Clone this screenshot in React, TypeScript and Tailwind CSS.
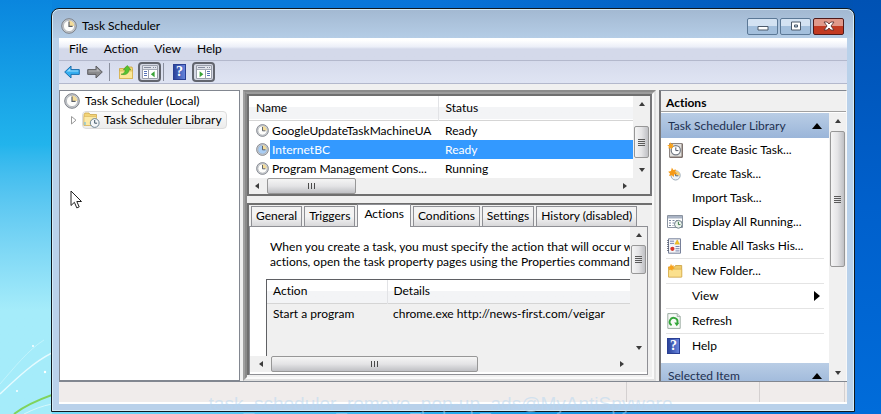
import { useState } from "react";
import type { ReactNode } from "react";
import clsx from "clsx";

interface Task {
  name: string;
  status: string;
}

interface ActionItem {
  label: string;
  icon?: ReactNode;
  separator?: boolean;
  submenu?: boolean;
}

const MENUS = ["File", "Action", "View", "Help"];

const TASKS: Task[] = [
  { name: "GoogleUpdateTaskMachineUA", status: "Ready" },
  { name: "InternetBC", status: "Ready" },
  { name: "Program Management Cons...", status: "Running" },
];

const TABS = ["General", "Triggers", "Actions", "Conditions", "Settings", "History (disabled)"];

/* ---------- icons ---------- */

function ClockIcon({ className, face = "#fdfdfb" }: { className?: string; face?: string }) {
  return (
    <svg viewBox="0 0 16 16" className={clsx("shrink-0", className)} fill="none" aria-hidden="true">
      <circle cx="8" cy="8" r="7.3" fill="#c9cdd2" stroke="#7b7f86" strokeWidth="1" />
      <circle cx="8" cy="8" r="5.6" fill={face} stroke="#a4a8ae" strokeWidth="0.7" />
      <path d="M8 8V2.6A5.4 5.4 0 0 1 13.4 8z" fill="#f3dc9a" />
      <path d="M8 3.6V8.4H11.6" stroke="#5c6068" strokeWidth="1.2" />
    </svg>
  );
}

function BackIcon() {
  return (
    <svg viewBox="0 0 16 14" className="h-[14px] w-4" aria-hidden="true">
      <path d="M.7 7 7 1v3.6h8.3v4.8H7V13z" fill="#35aef0" stroke="#1b6fae" strokeLinejoin="round" />
      <path d="M2.6 6.6 6.2 3.2v2.4h8.1v1z" fill="#9adcfb" />
    </svg>
  );
}

function ForwardIcon() {
  return (
    <svg viewBox="0 0 16 14" className="h-[14px] w-4" aria-hidden="true">
      <path d="M15.3 7 9 1v3.6H.7v4.8H9V13z" fill="#8b8b8d" stroke="#5f5f63" strokeLinejoin="round" />
      <path d="M13.4 6.6 9.8 3.2v2.4H1.7v1z" fill="#b4b4b6" />
    </svg>
  );
}

function UpFolderIcon() {
  return (
    <svg viewBox="0 0 16 16" className="h-4 w-4" aria-hidden="true">
      <path d="M1.5 4.5h5l1-1.5h6.5l.5 1.5v10h-13z" fill="#f3d774" stroke="#c9a23c" strokeWidth=".8" />
      <path d="M1.5 7h13v7.5h-13z" fill="#fbe797" stroke="#d0aa48" strokeWidth=".6" />
      <path d="M3 10.2c3-.4 4-2 4.2-4.4H5.4L9.3 1.4l3.5 4.4H11c-.2 3.6-3 5.8-8 4.4z" fill="#55c32f" stroke="#2f8f1c" strokeWidth=".5" />
    </svg>
  );
}

function PaneIcon({ flip }: { flip?: boolean }) {
  return (
    <svg viewBox="0 0 16 14" className="h-[14px] w-4" aria-hidden="true">
      <path d="M.5.5h15v13H.5z" fill="#fff" stroke="#9a9fab" />
      <path d="M1 1h14v3H1z" fill="#e0e3ea" />
      <path d="M2 2.5h7M11 2.5h1M13 2.5h1" stroke="#868ca0" />
      <path d="M1 4.5h14" stroke="#a5aab6" />
      {flip ? (
        <>
          <path d="M9.5 5v8.5" stroke="#9a9fab" />
          <path d="M11 6.5h3M11 8.5h3M11 10.5h3" stroke="#5873b8" />
          <path d="M3.6 6.2 7.4 9.2l-3.8 3z" fill="#3aa338" />
        </>
      ) : (
        <>
          <path d="M6.5 5v8.5" stroke="#9a9fab" />
          <path d="M2 6.5h3M2 8.5h3M2 10.5h3" stroke="#5873b8" />
          <path d="M12.6 6.2 8.8 9.2l3.8 3z" fill="#3aa338" />
        </>
      )}
    </svg>
  );
}

function HelpIcon() {
  return (
    <span className="flex h-4 w-[13px] items-center justify-center border border-[#2a3f93] bg-linear-to-r from-[#2c449c] to-[#6683dc] font-[Liberation_Serif,serif] text-sm leading-none font-bold text-white">
      ?
    </span>
  );
}

function LibraryFolderIcon() {
  return (
    <svg viewBox="0 0 17 16" className="h-4 w-[17px] shrink-0" aria-hidden="true">
      <path d="M1 2.5 2 1h4l1 1.5h6.5v11H1z" fill="#f2d477" stroke="#cda64a" strokeWidth=".8" />
      <path d="M1 4.5h12.5v9H1z" fill="#fbe9a6" stroke="#d6b25a" strokeWidth=".6" />
      <path d="M2 10v3" stroke="#59b6e8" />
      <circle cx="11.7" cy="11" r="4.4" fill="#f4f6f8" stroke="#6e8494" />
      <path d="M11.7 8v3.2h2.4" stroke="#3f5566" fill="none" />
    </svg>
  );
}

function BasicTaskIcon() {
  return (
    <svg viewBox="0 0 16 16" className="h-4 w-4" aria-hidden="true">
      <path d="M2.5 1.5h12.8v13.8H2.5z" fill="#e3e1de" stroke="#8d8582" />
      <path d="M15.2 2v13.2H3" stroke="#6d5d59" fill="none" />
      <circle cx="8.8" cy="8.3" r="4.6" fill="#fff" stroke="#757b85" strokeWidth="1.2" />
      <path d="M8.8 5.4v3.2h2.6" stroke="#4e5663" fill="none" />
      <path d="m3.5.2.9 2 2-.6-.8 2 1.6 1.2-2.2.5-.2 2.2-1.5-1.6-2 .7.7-2L.2 3.4l2.2-.6z" fill="#f8a21c" />
    </svg>
  );
}

function NewTaskIcon() {
  return (
    <svg viewBox="0 0 16 16" className="h-4 w-4" aria-hidden="true">
      <circle cx="8.6" cy="9.4" r="4.6" fill="#eef3f7" stroke="#9baab6" />
      <path d="M8.6 9.4V5A4.4 4.4 0 0 1 13 9.4z" fill="#f7cf74" />
      <path d="M8.6 6.6v3.2h2.8" stroke="#586977" fill="none" />
      <path d="m4.9 1.6 1.4 2.5 2.8-.6-.9 2.6 1.8 1.7-2.8.7-.5 2.5-1.8-1.8-2.8.7.9-2.5L1.2 5.8 4 5z" fill="#f59a17" />
    </svg>
  );
}

function RunningIcon() {
  return (
    <svg viewBox="0 0 16 14" className="h-[14px] w-4" aria-hidden="true">
      <path d="M.5.5h15v12H.5z" fill="#fff" stroke="#8a93a0" />
      <path d="M1 1h14v2.4H1z" fill="#a9b3c4" />
      <path d="M2 5.5h2M5.5 5.5h2M9 5.5h2M2 8h2M5.5 8h2M2 10.5h2M5.5 10.5h1" stroke="#7b87a0" />
      <circle cx="11.4" cy="9.3" r="3.9" fill="#eef4ee" stroke="#70808a" />
      <path d="M11.4 6.8v2.8h2" stroke="#3f7a4c" fill="none" />
    </svg>
  );
}

function HistoryIcon() {
  return (
    <svg viewBox="0 0 14 16" className="h-4 w-[14px]" aria-hidden="true">
      <path d="M1.5.8h12v14.4h-12z" fill="#f4f5f8" stroke="#77809a" />
      <path d="M3 3.2h4M3 5.4h4M8.5 8.5h4M8.5 10.7h4M8.5 12.9h4" stroke="#7a86ad" />
      <path d="M0 2.5h2M0 4.5h2M0 6.5h2M0 8.5h2M0 10.5h2M0 12.5h2" stroke="#5b6170" strokeWidth=".8" />
      <path d="m10.2 1.8 2.4 4.4H7.8z" fill="#f5c321" stroke="#c99a10" strokeWidth=".4" />
      <circle cx="5.4" cy="10.8" r="2.1" fill="#d8372a" />
    </svg>
  );
}

function NewFolderIcon() {
  return (
    <svg viewBox="0 0 16 16" className="h-4 w-4" aria-hidden="true">
      <path d="M1.5 4h6l1-1.5h6.2V14H1.5z" fill="#efca67" stroke="#c99e3d" strokeWidth=".8" />
      <path d="M1.5 6.2h13.2V14H1.5z" fill="#fbe08d" stroke="#d3a94a" strokeWidth=".6" />
      <path d="m4 .8.9 2 2-.5-.7 1.9L7.7 5.5l-2.1.5-.3 2-1.5-1.4-1.9.6.6-1.9L.8 4l2.2-.6z" fill="#f8a21c" />
    </svg>
  );
}

function RefreshIcon() {
  return (
    <svg viewBox="0 0 14 16" className="h-4 w-[14px]" aria-hidden="true">
      <path d="M.8.6h9.4l3 3v11.8H.8z" fill="#f7faf7" stroke="#93a59a" strokeWidth=".9" />
      <path d="M10.2.6v3h3" fill="#dde6df" stroke="#93a59a" strokeWidth=".8" />
      <path d="M4.6 12.2A3.9 3.9 0 1 1 10.3 10" fill="none" stroke="#35a63b" strokeWidth="1.9" />
      <path d="m7.2 9.5 5.2.2-2.7 3.6z" fill="#35a63b" />
    </svg>
  );
}

const ACTION_ITEMS: ActionItem[] = [
  { label: "Create Basic Task...", icon: <BasicTaskIcon /> },
  { label: "Create Task...", icon: <NewTaskIcon /> },
  { label: "Import Task..." },
  { label: "Display All Running...", icon: <RunningIcon /> },
  { label: "Enable All Tasks His...", icon: <HistoryIcon /> },
  { label: "New Folder...", icon: <NewFolderIcon />, separator: true },
  { label: "View", separator: true, submenu: true },
  { label: "Refresh", icon: <RefreshIcon />, separator: true },
  { label: "Help", icon: <HelpIcon />, separator: true },
];

/* ---------- scroll bars ---------- */

const ARROWS = {
  up: "M4 2 7 6H1z",
  down: "M4 6 1 2h6z",
  left: "M2 4 6 1v6z",
  right: "M6 4 2 1v6z",
};

function ScrollButton({ direction }: { direction: keyof typeof ARROWS }) {
  return (
    <button type="button" aria-label={`Scroll ${direction}`} className="flex h-4 w-4 shrink-0 items-center justify-center">
      <svg viewBox="0 0 8 8" className="h-2 w-2" aria-hidden="true">
        <path d={ARROWS[direction]} fill="#3c3c3c" />
      </svg>
    </button>
  );
}

function VScroll({ thumb }: { thumb: string }) {
  return (
    <div className="flex w-[17px] shrink-0 flex-col items-center bg-[#f0f0f0]">
      <ScrollButton direction="up" />
      <div className="flex w-full min-h-0 flex-1 flex-col">
        <div
          className={clsx(
            "mx-px flex flex-col items-center justify-center gap-px rounded-xs border border-[#979797] bg-linear-to-r from-[#f5f5f5] via-[#e4e4e6] to-[#bfc0c4]",
            thumb,
          )}
        >
          {[0, 1, 2, 3].map((i) => (
            <span key={i} className="h-px w-[7px] bg-[#5a5a5a]" />
          ))}
        </div>
      </div>
      <ScrollButton direction="down" />
    </div>
  );
}

function HScroll({ thumb }: { thumb: string }) {
  return (
    <div className="flex h-4 items-center bg-[#f0f0f0]">
      <ScrollButton direction="left" />
      <div className="flex h-full min-w-0 flex-1 pl-[2px]">
        <div
          className={clsx(
            "flex h-full items-center justify-center gap-[2px] rounded-xs border border-[#979797] bg-linear-to-b from-[#f5f5f5] via-[#e4e4e6] to-[#bfc0c4]",
            thumb,
          )}
        >
          {[0, 1, 2].map((i) => (
            <span key={i} className="h-[6px] w-px bg-[#4a4a4a]" />
          ))}
        </div>
      </div>
      <ScrollButton direction="right" />
    </div>
  );
}

/* ---------- window parts ---------- */

function Wallpaper() {
  return (
    <div className="absolute inset-0 bg-linear-to-r from-[#0a86de] via-[#0873d8] to-[#0050b0]">
      <div className="absolute inset-x-0 bottom-0 h-3 bg-linear-to-r from-[#7fe4fa] via-[#27aef0] to-[#0062cc]" />
      <div className="absolute inset-y-0 left-0 w-13 bg-linear-to-b from-[#0a86de] via-[#22b4ec] via-35% to-[#a5ecfa] to-75%" />
      <div className="absolute inset-y-0 right-0 w-7 bg-linear-to-b from-[#0052b4] via-[#0060cc] to-[#006cda]" />
      <svg viewBox="0 0 52 414" className="absolute top-0 left-0 h-full w-13" fill="none" aria-hidden="true">
        <path d="M0 394C18 377 34 362 52 353" stroke="#e6fbff" strokeWidth="1.4" />
        <path d="M0 384C14 368 28 350 44 340" stroke="#c9f5fd" strokeWidth=".8" />
        <path d="M14 414C26 405 38 400 52 395" stroke="#7fd35c" strokeWidth="2" />
        <path d="M24 414C34 409 42 406 52 404" stroke="#d6f8fb" />
        <circle cx="33" cy="346" r="1" fill="#fff" />
        <circle cx="45" cy="372" r="1.2" fill="#fff" />
        <circle cx="17" cy="391" r="1" fill="#fff" />
      </svg>
    </div>
  );
}

function TitleBar() {
  const caption =
    "flex h-[17px] w-[31px] items-center justify-center rounded-xs border border-[#5b7896] bg-linear-to-b from-[#d3e2f2] from-50% to-[#a3bfdc] to-50%";
  return (
    <header className="mx-px mt-px flex h-7 shrink-0 items-center rounded-t-md bg-linear-to-b from-[#a3b9d2] to-[#b5cde6] px-[6px] pt-1">
      <ClockIcon className="ml-[2px] h-4 w-4" />
      <h1 className="ml-[5px] flex-1">Task Scheduler</h1>
      <div className="flex gap-[2px] pr-[3px]">
        <button type="button" aria-label="Minimize" className={caption}>
          <svg viewBox="0 0 12 10" className="h-[10px] w-3">
            <path d="M1 5.5h10v3.5H1z" fill="#fff" stroke="#4c5a6b" />
          </svg>
        </button>
        <button type="button" aria-label="Maximize" className={caption}>
          <svg viewBox="0 0 12 10" className="h-[10px] w-3">
            <path d="M1.5 1h9v8h-9zM4.5 4h3v2h-3z" fill="#fff" fillRule="evenodd" stroke="#4c5a6b" />
          </svg>
        </button>
        <button
          type="button"
          aria-label="Close"
          className="flex h-[17px] w-[31px] items-center justify-center rounded-xs border border-[#4f1a1a] bg-linear-to-b from-[#e0998a] from-50% to-[#c23a22] to-50%"
        >
          <svg viewBox="0 0 12 10" className="h-[10px] w-3">
            <path d="M1 1h3.2L6 3l1.8-2H11L8 5l3 4H7.8L6 7 4.2 9H1l3-4z" fill="#fff" stroke="#5b3434" strokeWidth=".9" />
          </svg>
        </button>
      </div>
    </header>
  );
}

function ToolBar() {
  const toggled = "flex h-5 w-[23px] items-center justify-center rounded-sm border-2 border-[#62656e] bg-[#d5d8e4]";
  return (
    <div className="flex h-[23px] shrink-0 items-center border-b border-[#b3b8cc] bg-linear-to-b from-[#d6dbec] to-[#dfe4f3] pl-[5px]">
      <button type="button" aria-label="Back">
        <BackIcon />
      </button>
      <button type="button" aria-label="Forward" className="ml-[7px]">
        <ForwardIcon />
      </button>
      <span className="mx-[6px] h-[18px] w-px bg-[#8a8f9e]" />
      <button type="button" aria-label="Up one level" className="ml-[2px]">
        <UpFolderIcon />
      </button>
      <button type="button" aria-label="Show console tree" className={clsx(toggled, "ml-1")}>
        <PaneIcon />
      </button>
      <span className="ml-[2px] h-[18px] w-px bg-[#8a8f9e]" />
      <button type="button" aria-label="Help topics" className="ml-[9px]">
        <HelpIcon />
      </button>
      <button type="button" aria-label="Show action pane" className={clsx(toggled, "ml-[6px]")}>
        <PaneIcon flip />
      </button>
    </div>
  );
}

function TreePane() {
  return (
    <nav className="w-[181px] shrink-0 border border-[#828790] bg-white">
      <ul>
        <li>
          <a href="#local" className="flex h-5 items-center gap-[5px] pl-1">
            <ClockIcon className="h-4 w-4" />
            Task Scheduler (Local)
          </a>
          <ul>
            <li className="flex h-[18px] items-center pl-[10px]">
              <svg viewBox="0 0 8 10" className="h-[10px] w-2" aria-hidden="true">
                <path d="m1.5 1.5 4.5 3.7L1.5 9z" fill="#fff" stroke="#9a9a9a" />
              </svg>
              <a
                href="#library"
                className="ml-1 flex h-[18px] items-center gap-1 rounded-sm border border-[#dcdcdc] bg-linear-to-b from-[#fafafa] to-[#ececec] pr-1"
              >
                <LibraryFolderIcon />
                Task Scheduler Library
              </a>
            </li>
          </ul>
        </li>
      </ul>
    </nav>
  );
}

function TaskList() {
  const [selected, setSelected] = useState("InternetBC");

  return (
    <section className="border-2 border-[#6f6f6f] border-r-[#77777a] bg-[#f0f0f0]">
      <div className="flex">
        <div className="min-w-0 flex-1 bg-white">
          <table className="w-full table-fixed border-collapse text-left">
            <thead>
              <tr className="h-6 border-b border-[#d5d5d5] bg-linear-to-b from-white from-50% to-[#f3f4f6] to-50%">
                <th className="w-[189px] border-r border-[#e2e3e6] pl-[7px] font-normal">Name</th>
                <th className="pl-[7px] font-normal">Status</th>
              </tr>
            </thead>
            <tbody>
              {TASKS.map((task) => {
                const active = task.name === selected;
                return (
                  <tr key={task.name} onClick={() => setSelected(task.name)} className="h-[19px]">
                    <td className="p-0">
                      <div className="flex h-[19px] items-center gap-px pl-[7px]">
                        <ClockIcon className="h-[13px] w-[13px]" face={active ? "#a9cdf4" : "#fdfdfb"} />
                        <span
                          className={clsx(
                            "h-[19px] min-w-0 flex-1 pl-[2px] leading-[19px] whitespace-nowrap",
                            active && "bg-[#3399ff] text-white",
                          )}
                        >
                          {task.name}
                        </span>
                      </div>
                    </td>
                    <td className={clsx("py-0 pr-0 pl-[7px] leading-[19px]", active && "bg-[#3399ff] text-white")}>
                      {task.status}
                    </td>
                  </tr>
                );
              })}
            </tbody>
          </table>
        </div>
        <VScroll thumb="mt-[14px] h-8" />
      </div>
      <div className="pr-[17px]">
        <HScroll thumb="w-[89px]" />
      </div>
    </section>
  );
}

function TaskDetails() {
  const [tab, setTab] = useState("Actions");

  return (
    <section className="mt-[7px] flex min-h-0 flex-1 flex-col border-t-2 border-l-2 border-[#6f6f6f] bg-[#f0f0f0] pr-1">
      <div role="tablist" className="flex h-[21px] shrink-0 items-end gap-[2px] pl-[2px]">
        {TABS.map((name) => (
          <button
            key={name}
            type="button"
            role="tab"
            aria-selected={tab === name}
            onClick={() => setTab(name)}
            className={clsx(
              "border border-b-0 border-[#8e8f94] whitespace-nowrap",
              tab === name
                ? "relative z-10 -mb-px h-[23px] bg-white px-[6px] pb-1"
                : "h-5 bg-linear-to-b from-[#f3f3f3] from-50% to-[#d8d8da] px-1",
            )}
          >
            {name}
          </button>
        ))}
      </div>
      <div role="tabpanel" className="flex min-h-0 flex-1 flex-col border border-[#8e8f94] bg-white">
        <div className="flex min-h-0 flex-1">
          <div className="flex min-w-0 flex-1 flex-col overflow-hidden pt-3 pl-4">
            <p className="pl-1 leading-[15px] whitespace-nowrap">
              When you create a task, you must specify the action that will occur when your task starts.
              <br />
              actions, open the task property pages using the Properties command.
            </p>
            <div className="mt-[10px] min-h-0 flex-1 border-t border-l border-[#5f6064] bg-[#f0f0f0]">
              <table className="w-full table-fixed border-collapse text-left">
                <thead>
                  <tr className="h-6 border-b border-[#d5d5d5] bg-linear-to-b from-white from-50% to-[#f3f4f6] to-50%">
                    <th className="w-[120px] border-r border-[#e2e3e6] pl-[6px] font-normal">Action</th>
                    <th className="pl-[6px] font-normal">Details</th>
                  </tr>
                </thead>
                <tbody>
                  <tr className="h-5">
                    <td className="pl-[6px]">Start a program</td>
                    <td className="pl-[6px] whitespace-nowrap">chrome.exe http://news-first.com/veigar</td>
                  </tr>
                </tbody>
              </table>
            </div>
          </div>
          <VScroll thumb="mt-[2px] h-[29px]" />
        </div>
        <div className="mb-[2px] bg-[#f0f0f0] pr-[17px] pl-[3px]">
          <HScroll thumb="w-[207px]" />
        </div>
      </div>
    </section>
  );
}

function GroupHeader({ title }: { title: string }) {
  return (
    <button
      type="button"
      className="flex h-[25px] w-full items-center justify-between bg-linear-to-b from-[#b9cde5] to-[#9ab5d9] px-[7px] text-[#1e3050]"
    >
      {title}
      <svg viewBox="0 0 10 6" className="h-[6px] w-[10px]" aria-hidden="true">
        <path d="M5 0 10 6H0z" fill="#000" />
      </svg>
    </button>
  );
}

function ActionsPane() {
  return (
    <aside className="flex w-[188px] shrink-0 flex-col border-t border-r border-l-2 border-t-[#828790] border-r-[#f8f8f8] border-l-[#77777a] bg-white">
      <h2 className="h-[21px] shrink-0 border-b border-[#a0a0a0] bg-[#f0f0f0] pl-[5px] leading-[23px] font-bold">Actions</h2>
      <div className="flex min-h-0 flex-1 pt-px">
        <div className="min-w-0 flex-1 overflow-hidden">
          <GroupHeader title="Task Scheduler Library" />
          <ul>
            {ACTION_ITEMS.map((item) => (
              <li key={item.label} className={clsx("mx-[5px]", item.separator && "border-t border-[#e4e4e4]")}>
                <button type="button" className="flex h-6 w-full items-center whitespace-nowrap">
                  <span className="flex w-[26px] shrink-0 items-center pl-px">{item.icon}</span>
                  <span className="flex-1 text-left">{item.label}</span>
                  {item.submenu && (
                    <svg viewBox="0 0 6 10" className="mr-1 h-[10px] w-[6px]" aria-hidden="true">
                      <path d="M0 0 6 5 0 10z" fill="#000" />
                    </svg>
                  )}
                </button>
              </li>
            ))}
          </ul>
          <div className="pt-[5px]">
            <GroupHeader title="Selected Item" />
          </div>
        </div>
        <VScroll thumb="mt-[2px] h-[136px]" />
      </div>
    </aside>
  );
}

export default function App() {
  return (
    <div className="relative flex h-screen overflow-hidden pt-2 pr-[26px] pb-[2px] pl-[51px] font-['Lato','Open_Sans',sans-serif] text-xs text-black [font-variant-ligatures:none]">
      <Wallpaper />

      <main className="relative flex min-w-0 flex-1 flex-col overflow-hidden rounded-t-lg border border-[#10181f] bg-[#b9d1ea] shadow-[inset_0_0_0_1px_#d3ecf8]">
        <TitleBar />
        <div className="mx-[7px] mb-[7px] flex min-h-0 flex-1 flex-col bg-[#f0f0f0]">
          <div
            role="menubar"
            className="flex h-[23px] shrink-0 items-center border-b border-[#b3b8cc] bg-linear-to-b from-white from-10% via-[#eceff8] via-40% to-[#d4d9ea] to-50%"
          >
            {MENUS.map((menu) => (
              <button key={menu} type="button" role="menuitem" className="mr-[6px] px-[5px] first:ml-[5px]">
                {menu}
              </button>
            ))}
          </div>
          <ToolBar />

          <div className="flex min-h-0 flex-1 gap-[3px] pt-[6px]">
            <TreePane />
            <div className="flex min-w-0 flex-1 border-2 border-t-[#8b8b8b] border-r-[#e0e0e0] border-b-[#e0e0e0] border-l-[#a0a0a0]">
              <div className="flex min-w-0 flex-1 flex-col border-2 border-t-[#9c9c9c] border-r-[#fafafa] border-b-[#fafafa] border-l-[#8a8a8a] pb-[2px]">
                <TaskList />
                <TaskDetails />
              </div>
            </div>
            <ActionsPane />
          </div>

          <footer className="flex h-[23px] shrink-0 justify-end border-t border-b-2 border-t-[#828790] border-b-white bg-[#f0eceb] pr-[2px]">
            <span className="w-[133px] border-l border-[#d4d0d0]" />
            <span className="w-[86px] border-x border-[#d4d0d0]" />
          </footer>
        </div>
      </main>

      <p className="pointer-events-none absolute inset-x-0 -bottom-[2px] text-center font-['Liberation_Sans',sans-serif] text-[19px] leading-6 text-[#b4d6f2]/50">
        task_scheduler_remove_pop-up_ads@MyAntiSpyware
      </p>

      <svg viewBox="0 0 14 20" className="absolute top-[190px] left-[70px] h-5 w-[14px]" aria-hidden="true">
        <path d="M1 1v14.5l3.4-3.2 2.4 5.6 2.4-1-2.4-5.4h4.7z" fill="#fff" stroke="#222" strokeWidth="1" />
      </svg>
    </div>
  );
}
